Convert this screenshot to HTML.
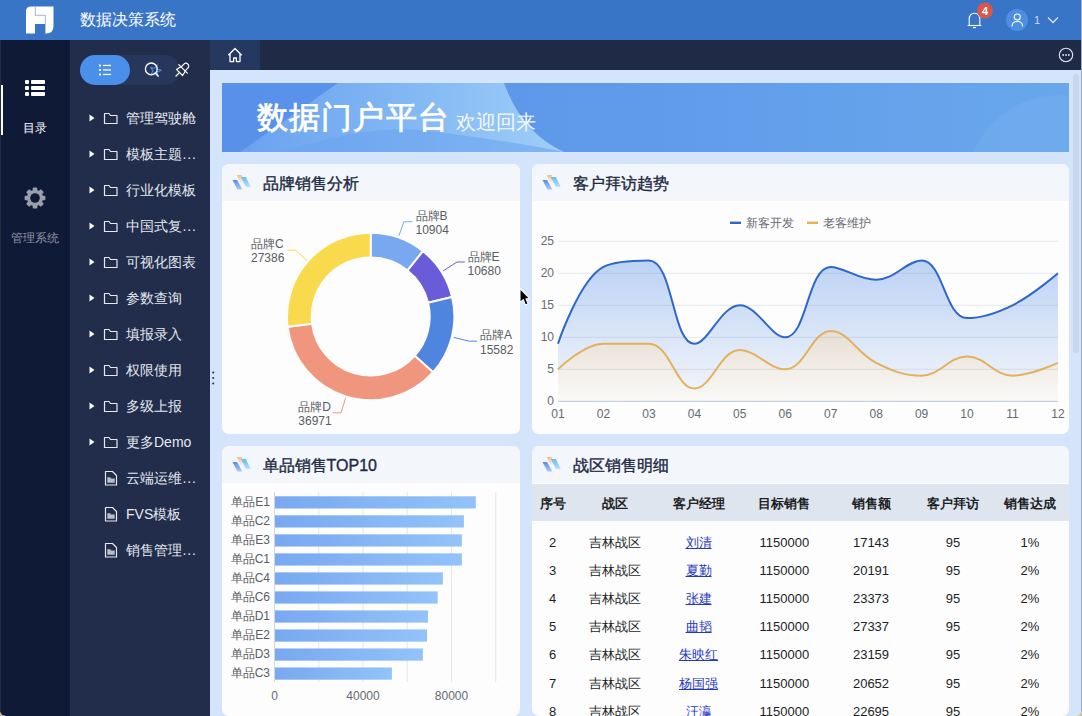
<!DOCTYPE html>
<html><head><meta charset="utf-8">
<style>
*{margin:0;padding:0;box-sizing:border-box}
html,body{width:1082px;height:716px;overflow:hidden;background:#c9b68f;font-family:"Liberation Sans",sans-serif}
.a{position:absolute}
.t{position:absolute;white-space:nowrap;line-height:1}
#win{position:absolute;left:0;top:0;width:1082px;height:716px;overflow:hidden;border-radius:0 0 6px 6px;background:#d4e4fb}
</style></head><body>
<div id="win">
  <!-- header -->
  <div class="a" style="left:0;top:0;width:1082px;height:40px;background:#3975c6"></div>
  <svg class="a" style="left:0;top:0" width="80" height="40">
    <path d="M31,6.5 H53.5 V26 Q53.5,33.5 46,33.5 H45 V24 H35 V33.5 H26 V11.5 Q26,6.5 31,6.5 Z" fill="#fff"/>
    <path d="M35.3,7 V15.3 H45.3 V33" stroke="#5d7fae" stroke-width="0.7" fill="none" opacity="0.8"/>
  </svg>
  <div class="t" style="left:80px;top:12px;font-size:16px;color:#fff">数据决策系统</div>
  <!-- bell -->
  <svg class="a" style="left:960px;top:0" width="110" height="40">
    <path d="M9.2,25.5 V19.5 Q9.2,13.3 14.5,13.3 Q19.8,13.3 19.8,19.5 V25.5" fill="none" stroke="#fff" stroke-width="1.1"/>
    <path d="M7.6,25.5 H21.4" stroke="#fff" stroke-width="1.1"/>
    <path d="M13,27.6 H16" stroke="#fff" stroke-width="1.1"/>
    <circle cx="25" cy="10.5" r="8" fill="#d9564a"/>
    <text x="25" y="14.5" font-size="11" font-weight="bold" fill="#fff" text-anchor="middle" font-family="Liberation Sans">4</text>
    <circle cx="57" cy="20" r="11" fill="#4d8fe3"/>
    <circle cx="57.3" cy="17" r="3" fill="none" stroke="#fff" stroke-width="1.1"/>
    <path d="M52,26.5 Q52,21.5 57.3,21.5 Q62.6,21.5 62.6,26.5" fill="none" stroke="#fff" stroke-width="1.1"/>
    <text x="74" y="23.8" font-size="11" fill="#cfdcef" font-family="Liberation Sans">1</text>
    <path d="M88,17.5 L93,22.5 L98,17.5" fill="none" stroke="#d6e2f5" stroke-width="1.3"/>
  </svg>

  <!-- left nav -->
  <div class="a" style="left:0;top:40px;width:70px;height:676px;background:#0f1a36"></div>
  <div class="a" style="left:0;top:85px;width:3px;height:50px;background:#fff"></div>
  <svg class="a" style="left:0;top:70px" width="70" height="40">
    <rect x="25" y="10" width="4" height="4" rx="1" fill="#fff"/>
    <rect x="31" y="10" width="14" height="4" rx="1" fill="#fff"/>
    <rect x="25" y="16" width="4" height="4" rx="1" fill="#fff"/>
    <rect x="31" y="16" width="14" height="4" rx="1" fill="#fff"/>
    <rect x="25" y="22" width="4" height="4" rx="1" fill="#fff"/>
    <rect x="31" y="22" width="14" height="4" rx="1" fill="#fff"/>
  </svg>
  <div class="t" style="left:23px;top:122px;font-size:12px;color:#fff">目录</div>
  <svg class="a" style="left:24px;top:187px" width="22" height="22">
    <g transform="translate(11,11)" fill="#9aa0ab"><rect x="-2.3" y="-10.4" width="4.6" height="5" rx="1" transform="rotate(0)"/><rect x="-2.3" y="-10.4" width="4.6" height="5" rx="1" transform="rotate(45)"/><rect x="-2.3" y="-10.4" width="4.6" height="5" rx="1" transform="rotate(90)"/><rect x="-2.3" y="-10.4" width="4.6" height="5" rx="1" transform="rotate(135)"/><rect x="-2.3" y="-10.4" width="4.6" height="5" rx="1" transform="rotate(180)"/><rect x="-2.3" y="-10.4" width="4.6" height="5" rx="1" transform="rotate(225)"/><rect x="-2.3" y="-10.4" width="4.6" height="5" rx="1" transform="rotate(270)"/><rect x="-2.3" y="-10.4" width="4.6" height="5" rx="1" transform="rotate(315)"/><circle r="8.1"/></g>
    <circle cx="11" cy="11" r="4.8" fill="#0f1a36"/>
  </svg>
  <div class="t" style="left:11px;top:232px;font-size:12px;color:#8f95a1">管理系统</div>

  <!-- side tree -->
  <div class="a" style="left:70px;top:40px;width:140px;height:676px;background:#212d4b"></div>
  <div class="a" style="left:80px;top:55px;width:100px;height:30px;border-radius:15px;background:#27375b"></div>
  <div class="a" style="left:80px;top:55px;width:50px;height:30px;border-radius:15px;background:#4a8fe9"></div>
  <svg class="a" style="left:80px;top:55px" width="130" height="30">
    <rect x="19" y="9.5" width="2" height="2" fill="#fff"/><rect x="23" y="9.8" width="8" height="1.3" fill="#fff"/>
    <rect x="19" y="14" width="2" height="2" fill="#fff"/><rect x="23" y="14.3" width="8" height="1.3" fill="#fff"/>
    <rect x="19" y="18.5" width="2" height="2" fill="#fff"/><rect x="23" y="18.8" width="8" height="1.3" fill="#fff"/>
    <path d="M75.5,9.5 L76.8,13.6 L81,13.8 L77.7,16.4 L79,20.6 L75.5,18.1 L72,20.6 L73.3,16.4 L70,13.8 L74.2,13.6 Z" fill="#27375b" stroke="#4a8fe9" stroke-width="1.1" stroke-linejoin="round" transform="rotate(15 75.5 15.5)"/>
    <circle cx="71.3" cy="13.9" r="5.9" fill="none" stroke="#fff" stroke-width="1.3"/>
    <path d="M75.6,18.3 L78.4,21.1" stroke="#fff" stroke-width="1.3" stroke-linecap="round"/>
    <g transform="translate(102,15) rotate(45)" fill="none" stroke="#fff" stroke-width="1.2" stroke-linejoin="round" stroke-linecap="round">
      <path d="M-2.8,-1.5 V-5.5 A2.8,2.8 0 0 1 2.8,-5.5 V-1.5"/>
      <path d="M-6,-1.5 H6"/>
      <path d="M-3.2,-1.5 L-4.3,3.5 H4.3 L3.2,-1.5"/>
      <path d="M0,3.5 V8.5"/>
    </g>
  </svg>
  <div id="tree">
  <svg class="a" style="left:86px;top:109px" width="34" height="18"><path d="M3.5,5.5 L8.5,9 L3.5,12.5 Z" fill="#fff"/><path d="M18.5,4.5 H23 L24.5,6.5 H31 V14.5 H18.5 Z" fill="none" stroke="#e6e9ef" stroke-width="1.2" stroke-linejoin="round"/></svg>
  <div class="t" style="left:126px;top:111px;font-size:14px;color:#e4e8ef">管理驾驶舱</div>
  <svg class="a" style="left:86px;top:145px" width="34" height="18"><path d="M3.5,5.5 L8.5,9 L3.5,12.5 Z" fill="#fff"/><path d="M18.5,4.5 H23 L24.5,6.5 H31 V14.5 H18.5 Z" fill="none" stroke="#e6e9ef" stroke-width="1.2" stroke-linejoin="round"/></svg>
  <div class="t" style="left:126px;top:147px;font-size:14px;color:#e4e8ef">模板主题<span style="letter-spacing:0.8px;margin-left:0.5px">...</span></div>
  <svg class="a" style="left:86px;top:181px" width="34" height="18"><path d="M3.5,5.5 L8.5,9 L3.5,12.5 Z" fill="#fff"/><path d="M18.5,4.5 H23 L24.5,6.5 H31 V14.5 H18.5 Z" fill="none" stroke="#e6e9ef" stroke-width="1.2" stroke-linejoin="round"/></svg>
  <div class="t" style="left:126px;top:183px;font-size:14px;color:#e4e8ef">行业化模板</div>
  <svg class="a" style="left:86px;top:217px" width="34" height="18"><path d="M3.5,5.5 L8.5,9 L3.5,12.5 Z" fill="#fff"/><path d="M18.5,4.5 H23 L24.5,6.5 H31 V14.5 H18.5 Z" fill="none" stroke="#e6e9ef" stroke-width="1.2" stroke-linejoin="round"/></svg>
  <div class="t" style="left:126px;top:219px;font-size:14px;color:#e4e8ef">中国式复<span style="letter-spacing:0.8px;margin-left:0.5px">...</span></div>
  <svg class="a" style="left:86px;top:253px" width="34" height="18"><path d="M3.5,5.5 L8.5,9 L3.5,12.5 Z" fill="#fff"/><path d="M18.5,4.5 H23 L24.5,6.5 H31 V14.5 H18.5 Z" fill="none" stroke="#e6e9ef" stroke-width="1.2" stroke-linejoin="round"/></svg>
  <div class="t" style="left:126px;top:255px;font-size:14px;color:#e4e8ef">可视化图表</div>
  <svg class="a" style="left:86px;top:289px" width="34" height="18"><path d="M3.5,5.5 L8.5,9 L3.5,12.5 Z" fill="#fff"/><path d="M18.5,4.5 H23 L24.5,6.5 H31 V14.5 H18.5 Z" fill="none" stroke="#e6e9ef" stroke-width="1.2" stroke-linejoin="round"/></svg>
  <div class="t" style="left:126px;top:291px;font-size:14px;color:#e4e8ef">参数查询</div>
  <svg class="a" style="left:86px;top:325px" width="34" height="18"><path d="M3.5,5.5 L8.5,9 L3.5,12.5 Z" fill="#fff"/><path d="M18.5,4.5 H23 L24.5,6.5 H31 V14.5 H18.5 Z" fill="none" stroke="#e6e9ef" stroke-width="1.2" stroke-linejoin="round"/></svg>
  <div class="t" style="left:126px;top:327px;font-size:14px;color:#e4e8ef">填报录入</div>
  <svg class="a" style="left:86px;top:361px" width="34" height="18"><path d="M3.5,5.5 L8.5,9 L3.5,12.5 Z" fill="#fff"/><path d="M18.5,4.5 H23 L24.5,6.5 H31 V14.5 H18.5 Z" fill="none" stroke="#e6e9ef" stroke-width="1.2" stroke-linejoin="round"/></svg>
  <div class="t" style="left:126px;top:363px;font-size:14px;color:#e4e8ef">权限使用</div>
  <svg class="a" style="left:86px;top:397px" width="34" height="18"><path d="M3.5,5.5 L8.5,9 L3.5,12.5 Z" fill="#fff"/><path d="M18.5,4.5 H23 L24.5,6.5 H31 V14.5 H18.5 Z" fill="none" stroke="#e6e9ef" stroke-width="1.2" stroke-linejoin="round"/></svg>
  <div class="t" style="left:126px;top:399px;font-size:14px;color:#e4e8ef">多级上报</div>
  <svg class="a" style="left:86px;top:433px" width="34" height="18"><path d="M3.5,5.5 L8.5,9 L3.5,12.5 Z" fill="#fff"/><path d="M18.5,4.5 H23 L24.5,6.5 H31 V14.5 H18.5 Z" fill="none" stroke="#e6e9ef" stroke-width="1.2" stroke-linejoin="round"/></svg>
  <div class="t" style="left:126px;top:435px;font-size:14px;color:#e4e8ef">更多Demo</div>
  <svg class="a" style="left:100px;top:469px" width="20" height="18"><path d="M5.5,2.5 H12.5 L16.5,6.5 V16 H5.5 Z" fill="none" stroke="#e6e9ef" stroke-width="1.2" stroke-linejoin="round"/><path d="M7.3,8.2 H10.6 V9.4 H14.7 V13.8 H7.3 Z" fill="#b9bfca"/></svg>
  <div class="t" style="left:126px;top:471px;font-size:14px;color:#e4e8ef">云端运维<span style="letter-spacing:0.8px;margin-left:0.5px">...</span></div>
  <svg class="a" style="left:100px;top:505px" width="20" height="18"><path d="M5.5,2.5 H12.5 L16.5,6.5 V16 H5.5 Z" fill="none" stroke="#e6e9ef" stroke-width="1.2" stroke-linejoin="round"/><path d="M7.3,8.2 H10.6 V9.4 H14.7 V13.8 H7.3 Z" fill="#b9bfca"/></svg>
  <div class="t" style="left:126px;top:507px;font-size:14px;color:#e4e8ef">FVS模板</div>
  <svg class="a" style="left:100px;top:541px" width="20" height="18"><path d="M5.5,2.5 H12.5 L16.5,6.5 V16 H5.5 Z" fill="none" stroke="#e6e9ef" stroke-width="1.2" stroke-linejoin="round"/><path d="M7.3,8.2 H10.6 V9.4 H14.7 V13.8 H7.3 Z" fill="#b9bfca"/></svg>
  <div class="t" style="left:126px;top:543px;font-size:14px;color:#e4e8ef">销售管理<span style="letter-spacing:0.8px;margin-left:0.5px">...</span></div>
  </div><!--/tree-->

  <!-- tab bar -->
  <div class="a" style="left:210px;top:40px;width:872px;height:30px;background:#1f2a47"></div>
  <div class="a" style="left:210px;top:40px;width:50px;height:30px;background:#253860"></div>
  <svg class="a" style="left:226px;top:46px" width="18" height="18">
    <path d="M2.3,9.2 L9,2.5 L15.7,9.2 M4,7.5 V15.6 H7.6 V12 H10.4 V15.6 H14 V7.5" fill="none" stroke="#fff" stroke-width="1.3" stroke-linejoin="round"/>
  </svg>
  <svg class="a" style="left:1058px;top:47px" width="16" height="16">
    <circle cx="8" cy="8" r="6.7" fill="none" stroke="#dfe5ee" stroke-width="1.1"/>
    <circle cx="5.2" cy="8" r="0.9" fill="#dfe5ee"/><circle cx="8" cy="8" r="0.9" fill="#dfe5ee"/><circle cx="10.8" cy="8" r="0.9" fill="#dfe5ee"/>
  </svg>
  <svg class="a" style="left:208px;top:368px" width="10" height="20">
    <circle cx="5.2" cy="4.5" r="1" fill="#1e2a48"/><circle cx="5.2" cy="10" r="1" fill="#2a3550"/><circle cx="5.2" cy="15.5" r="1" fill="#1e2a48"/>
  </svg>

  <!-- scrollbar -->
    <div class="a" style="left:1072.5px;top:73.5px;width:6px;height:279px;border-radius:3px;background:#c8d7ee"></div>
  <div class="a" style="left:1080.5px;top:0;width:1.5px;height:716px;background:#a3abb8"></div>
  <div class="a" style="left:0;top:40px;width:1px;height:676px;background:#222c42"></div>

  <!-- banner -->
  <svg class="a" style="left:222px;top:83px" width="847" height="69">
    <defs>
      <linearGradient id="bg1" x1="0" y1="0" x2="1" y2="0">
        <stop offset="0" stop-color="#5890ea"/><stop offset="0.4" stop-color="#5e99ea"/><stop offset="1" stop-color="#69a7ec"/>
      </linearGradient>
      <linearGradient id="bg2" x1="0" y1="0" x2="1" y2="0">
        <stop offset="0" stop-color="#6aa2ef"/><stop offset="0.6" stop-color="#86bbf4"/><stop offset="1" stop-color="#a0cef8"/>
      </linearGradient>
    </defs>
    <rect width="847" height="69" fill="url(#bg1)"/>
    <path d="M18,69 L116,0 H282 Q300,50 342,69 Z" fill="url(#bg2)"/>
    <path d="M60,69 Q150,40 208,48 Q300,60 342,69 Z" fill="#6aa2ee" opacity="0.55"/>
    <circle cx="838" cy="107" r="95" fill="#7fb9f1" opacity="0.25"/>
  </svg>
  <div class="t" style="left:256.5px;top:101.5px;font-size:30.5px;letter-spacing:1.3px;color:#fff;-webkit-text-stroke:0.8px #fff">数据门户平台</div>
  <div class="t" style="left:456px;top:112px;font-size:20px;color:#f4f8ff">欢迎回来</div>

  <div id="cards">
  <svg width="0" height="0" style="position:absolute"><defs>
<linearGradient id="ic1" x1="0" y1="0" x2="0" y2="1"><stop offset="0" stop-color="#5b8de8"/><stop offset="1" stop-color="#adc9f1"/></linearGradient>
<linearGradient id="ic2" x1="0" y1="0" x2="0" y2="1"><stop offset="0" stop-color="#f3bd86"/><stop offset="1" stop-color="#f3bd86" stop-opacity="0"/></linearGradient>
<linearGradient id="ic3" x1="0" y1="0" x2="0" y2="1"><stop offset="0" stop-color="#5fbff0"/><stop offset="1" stop-color="#bcdcf8"/></linearGradient>
</defs></svg>
  <div class="a" style="left:222px;top:164px;width:298px;height:270px;border-radius:7px;background:#fdfdfd;overflow:hidden"><div class="a" style="left:0;top:0;width:298px;height:37px;background:#f3f6fa"></div></div><svg class="a" style="left:222px;top:164px" width="32" height="30"><path d="M10.5,16.1 H15.1 L20.3,25.6 H15.4 Z" fill="url(#ic1)"/><path d="M14.7,10.9 H19.6 L23.5,19.5 H18.6 Z" fill="url(#ic2)"/><path d="M18.9,13 H23.8 L28.7,22.8 H23.8 Z" fill="url(#ic3)"/></svg><div class="t" style="left:262.6px;top:175.8px;font-size:16px;color:#1e2b45;-webkit-text-stroke:0.38px #1e2b45">品牌销售分析</div>
  <div class="a" style="left:532px;top:164px;width:537px;height:270px;border-radius:7px;background:#fdfdfd;overflow:hidden"><div class="a" style="left:0;top:0;width:537px;height:37px;background:#f3f6fa"></div></div><svg class="a" style="left:532px;top:164px" width="32" height="30"><path d="M10.5,16.1 H15.1 L20.3,25.6 H15.4 Z" fill="url(#ic1)"/><path d="M14.7,10.9 H19.6 L23.5,19.5 H18.6 Z" fill="url(#ic2)"/><path d="M18.9,13 H23.8 L28.7,22.8 H23.8 Z" fill="url(#ic3)"/></svg><div class="t" style="left:572.6px;top:175.8px;font-size:16px;color:#1e2b45;-webkit-text-stroke:0.38px #1e2b45">客户拜访趋势</div>
  <div class="a" style="left:222px;top:446px;width:298px;height:270px;border-radius:7px;background:#fdfdfd;overflow:hidden"><div class="a" style="left:0;top:0;width:298px;height:37px;background:#f3f6fa"></div></div><svg class="a" style="left:222px;top:446px" width="32" height="30"><path d="M10.5,16.1 H15.1 L20.3,25.6 H15.4 Z" fill="url(#ic1)"/><path d="M14.7,10.9 H19.6 L23.5,19.5 H18.6 Z" fill="url(#ic2)"/><path d="M18.9,13 H23.8 L28.7,22.8 H23.8 Z" fill="url(#ic3)"/></svg><div class="t" style="left:262.6px;top:457.8px;font-size:16px;color:#1e2b45;-webkit-text-stroke:0.38px #1e2b45">单品销售TOP10</div>
  <div class="a" style="left:532px;top:446px;width:537px;height:270px;border-radius:7px;background:#fdfdfd;overflow:hidden"><div class="a" style="left:0;top:0;width:537px;height:37px;background:#f3f6fa"></div></div><svg class="a" style="left:532px;top:446px" width="32" height="30"><path d="M10.5,16.1 H15.1 L20.3,25.6 H15.4 Z" fill="url(#ic1)"/><path d="M14.7,10.9 H19.6 L23.5,19.5 H18.6 Z" fill="url(#ic2)"/><path d="M18.9,13 H23.8 L28.7,22.8 H23.8 Z" fill="url(#ic3)"/></svg><div class="t" style="left:572.6px;top:457.8px;font-size:16px;color:#1e2b45;-webkit-text-stroke:0.38px #1e2b45">战区销售明细</div>
  <svg class="a" style="left:0;top:0" width="1082" height="716">
<path d="M370.70,232.80 A83.7,83.7 0 0 1 422.99,251.15 L407.56,270.43 A59,59 0 0 0 370.70,257.50 Z" fill="#78a9f0" stroke="#fdfdfd" stroke-width="2" stroke-linejoin="round"/>
<path d="M422.99,251.15 A83.7,83.7 0 0 1 452.10,297.01 L428.08,302.76 A59,59 0 0 0 407.56,270.43 Z" fill="#6a5bd8" stroke="#fdfdfd" stroke-width="2" stroke-linejoin="round"/>
<path d="M452.10,297.01 A83.7,83.7 0 0 1 433.11,372.28 L414.69,355.82 A59,59 0 0 0 428.08,302.76 Z" fill="#4f84df" stroke="#fdfdfd" stroke-width="2" stroke-linejoin="round"/>
<path d="M433.11,372.28 A83.7,83.7 0 0 1 287.64,326.86 L312.15,323.80 A59,59 0 0 0 414.69,355.82 Z" fill="#f0967f" stroke="#fdfdfd" stroke-width="2" stroke-linejoin="round"/>
<path d="M287.64,326.86 A83.7,83.7 0 0 1 370.70,232.80 L370.70,257.50 A59,59 0 0 0 312.15,323.80 Z" fill="#f9da4d" stroke="#fdfdfd" stroke-width="2" stroke-linejoin="round"/>
<polyline points="399,235.7 403.8,221.7 412.3,221.7" fill="none" stroke="#78a9f0" stroke-width="1"/>
<polyline points="443,271 457,262 464.8,262" fill="none" stroke="#6a5bd8" stroke-width="1"/>
<polyline points="453.7,337.4 469.3,341.2 477.1,341.2" fill="none" stroke="#4f84df" stroke-width="1"/>
<polyline points="345.6,398 341,412.8 332.7,412.8" fill="none" stroke="#f0967f" stroke-width="1"/>
<polyline points="307.4,260.9 295.5,250.2 287.4,250.2" fill="none" stroke="#f9da4d" stroke-width="1"/>
</svg>
<div class="t" style="left:415.5px;top:208.5px;font-size:12px;color:#595c63;line-height:14.5px">品牌B<br>10904</div>
<div class="t" style="left:467.5px;top:249.5px;font-size:12px;color:#595c63;line-height:14.5px">品牌E<br>10680</div>
<div class="t" style="left:480px;top:328.0px;font-size:12px;color:#595c63;line-height:14.5px">品牌A<br>15582</div>
<div class="t" style="left:298.3px;top:399.8px;font-size:12px;color:#595c63;line-height:14.5px">品牌D<br>36971</div>
<div class="t" style="left:251px;top:236.8px;font-size:12px;color:#595c63;line-height:14.5px">品牌C<br>27386</div>
  <svg class="a" style="left:0;top:0" width="1082" height="716">
<defs><linearGradient id="fa" x1="0" y1="260" x2="0" y2="401" gradientUnits="userSpaceOnUse"><stop offset="0" stop-color="#bcd2f4"/><stop offset="1" stop-color="#f3f6fb"/></linearGradient>
<linearGradient id="fb" x1="0" y1="331" x2="0" y2="401" gradientUnits="userSpaceOnUse"><stop offset="0" stop-color="#e6ded3"/><stop offset="1" stop-color="#fbfaf8"/></linearGradient></defs>
<path d="M558.00,343.70 C558.00,343.70 579.44,279.34 603.45,266.90 C615.80,260.50 637.04,260.50 648.90,260.50 C673.40,260.50 672.01,343.70 694.35,343.70 C708.37,343.70 721.00,305.30 739.80,305.30 C757.36,305.30 770.75,337.30 785.25,337.30 C807.11,337.30 807.44,266.90 830.70,266.90 C843.80,266.90 858.37,279.70 876.15,279.70 C894.73,279.70 906.98,260.50 921.60,260.50 C943.34,260.50 944.93,318.10 967.05,318.10 C981.29,318.10 995.80,313.53 1012.50,305.30 C1032.16,295.61 1057.95,273.30 1057.95,273.30 L1057.95,401.3 L558,401.3 Z" fill="url(#fa)"/>
<path d="M558.00,369.30 C558.00,369.30 584.02,343.70 603.45,343.70 C620.38,343.70 633.78,343.70 648.90,343.70 C670.14,343.70 675.53,388.50 694.35,388.50 C711.89,388.50 719.92,350.10 739.80,350.10 C756.28,350.10 768.77,369.30 785.25,369.30 C805.13,369.30 811.90,330.90 830.70,330.90 C848.26,330.90 856.49,353.21 876.15,362.90 C892.85,371.13 903.82,375.70 921.60,375.70 C940.18,375.70 948.87,356.50 967.05,356.50 C985.23,356.50 993.92,375.70 1012.50,375.70 C1030.28,375.70 1057.95,362.90 1057.95,362.90 L1057.95,401.3 L558,401.3 Z" fill="url(#fb)"/>
<line x1="558" y1="369.3" x2="1058" y2="369.3" stroke="#6a7a9a" stroke-opacity="0.17" stroke-width="1"/>
<line x1="558" y1="337.3" x2="1058" y2="337.3" stroke="#6a7a9a" stroke-opacity="0.17" stroke-width="1"/>
<line x1="558" y1="305.3" x2="1058" y2="305.3" stroke="#6a7a9a" stroke-opacity="0.17" stroke-width="1"/>
<line x1="558" y1="273.3" x2="1058" y2="273.3" stroke="#6a7a9a" stroke-opacity="0.17" stroke-width="1"/>
<line x1="558" y1="241.3" x2="1058" y2="241.3" stroke="#6a7a9a" stroke-opacity="0.17" stroke-width="1"/>
<line x1="558" y1="401.3" x2="1058" y2="401.3" stroke="#b9c7da" stroke-width="1"/>
<path d="M558.00,343.70 C558.00,343.70 579.44,279.34 603.45,266.90 C615.80,260.50 637.04,260.50 648.90,260.50 C673.40,260.50 672.01,343.70 694.35,343.70 C708.37,343.70 721.00,305.30 739.80,305.30 C757.36,305.30 770.75,337.30 785.25,337.30 C807.11,337.30 807.44,266.90 830.70,266.90 C843.80,266.90 858.37,279.70 876.15,279.70 C894.73,279.70 906.98,260.50 921.60,260.50 C943.34,260.50 944.93,318.10 967.05,318.10 C981.29,318.10 995.80,313.53 1012.50,305.30 C1032.16,295.61 1057.95,273.30 1057.95,273.30" fill="none" stroke="#2f67c8" stroke-width="2"/>
<path d="M558.00,369.30 C558.00,369.30 584.02,343.70 603.45,343.70 C620.38,343.70 633.78,343.70 648.90,343.70 C670.14,343.70 675.53,388.50 694.35,388.50 C711.89,388.50 719.92,350.10 739.80,350.10 C756.28,350.10 768.77,369.30 785.25,369.30 C805.13,369.30 811.90,330.90 830.70,330.90 C848.26,330.90 856.49,353.21 876.15,362.90 C892.85,371.13 903.82,375.70 921.60,375.70 C940.18,375.70 948.87,356.50 967.05,356.50 C985.23,356.50 993.92,375.70 1012.50,375.70 C1030.28,375.70 1057.95,362.90 1057.95,362.90" fill="none" stroke="#e2b15e" stroke-width="2"/>
<line x1="730" y1="222.8" x2="741" y2="222.8" stroke="#2f67c8" stroke-width="2.4"/>
<line x1="807" y1="222.8" x2="818" y2="222.8" stroke="#e2b15e" stroke-width="2.4"/>
</svg>
<div class="t" style="left:520px;width:34px;text-align:right;top:394.8px;font-size:12px;color:#666a72">0</div>
<div class="t" style="left:520px;width:34px;text-align:right;top:362.8px;font-size:12px;color:#666a72">5</div>
<div class="t" style="left:520px;width:34px;text-align:right;top:330.8px;font-size:12px;color:#666a72">10</div>
<div class="t" style="left:520px;width:34px;text-align:right;top:298.8px;font-size:12px;color:#666a72">15</div>
<div class="t" style="left:520px;width:34px;text-align:right;top:266.8px;font-size:12px;color:#666a72">20</div>
<div class="t" style="left:520px;width:34px;text-align:right;top:234.8px;font-size:12px;color:#666a72">25</div>
<div class="t" style="left:538.0px;width:40px;text-align:center;top:407.5px;font-size:12px;color:#666a72">01</div>
<div class="t" style="left:583.5px;width:40px;text-align:center;top:407.5px;font-size:12px;color:#666a72">02</div>
<div class="t" style="left:628.9px;width:40px;text-align:center;top:407.5px;font-size:12px;color:#666a72">03</div>
<div class="t" style="left:674.4px;width:40px;text-align:center;top:407.5px;font-size:12px;color:#666a72">04</div>
<div class="t" style="left:719.8px;width:40px;text-align:center;top:407.5px;font-size:12px;color:#666a72">05</div>
<div class="t" style="left:765.2px;width:40px;text-align:center;top:407.5px;font-size:12px;color:#666a72">06</div>
<div class="t" style="left:810.7px;width:40px;text-align:center;top:407.5px;font-size:12px;color:#666a72">07</div>
<div class="t" style="left:856.2px;width:40px;text-align:center;top:407.5px;font-size:12px;color:#666a72">08</div>
<div class="t" style="left:901.6px;width:40px;text-align:center;top:407.5px;font-size:12px;color:#666a72">09</div>
<div class="t" style="left:947.0px;width:40px;text-align:center;top:407.5px;font-size:12px;color:#666a72">10</div>
<div class="t" style="left:992.5px;width:40px;text-align:center;top:407.5px;font-size:12px;color:#666a72">11</div>
<div class="t" style="left:1038.0px;width:40px;text-align:center;top:407.5px;font-size:12px;color:#666a72">12</div>
<div class="t" style="left:746px;top:216.5px;font-size:12px;color:#666a72">新客开发</div>
<div class="t" style="left:823px;top:216.5px;font-size:12px;color:#666a72">老客维护</div>
  <svg class="a" style="left:0;top:0" width="1082" height="716">
<defs><linearGradient id="bar" x1="0" y1="0" x2="1" y2="0"><stop offset="0" stop-color="#78a8f0"/><stop offset="1" stop-color="#93c3f9"/></linearGradient></defs>
<line x1="318.75" y1="492" x2="318.75" y2="682" stroke="#e3e6ee" stroke-width="1"/>
<line x1="363.00" y1="492" x2="363.00" y2="682" stroke="#e3e6ee" stroke-width="1"/>
<line x1="407.25" y1="492" x2="407.25" y2="682" stroke="#e3e6ee" stroke-width="1"/>
<line x1="451.50" y1="492" x2="451.50" y2="682" stroke="#e3e6ee" stroke-width="1"/>
<line x1="495.75" y1="492" x2="495.75" y2="682" stroke="#e3e6ee" stroke-width="1"/>
<line x1="274.5" y1="492" x2="274.5" y2="682" stroke="#d0d5de" stroke-width="1"/>
<rect x="275" y="496.30" width="200.80" height="12.2" fill="url(#bar)"/>
<rect x="275" y="515.32" width="188.90" height="12.2" fill="url(#bar)"/>
<rect x="275" y="534.34" width="186.90" height="12.2" fill="url(#bar)"/>
<rect x="275" y="553.36" width="186.90" height="12.2" fill="url(#bar)"/>
<rect x="275" y="572.38" width="167.90" height="12.2" fill="url(#bar)"/>
<rect x="275" y="591.40" width="162.70" height="12.2" fill="url(#bar)"/>
<rect x="275" y="610.42" width="153.00" height="12.2" fill="url(#bar)"/>
<rect x="275" y="629.44" width="152.00" height="12.2" fill="url(#bar)"/>
<rect x="275" y="648.46" width="147.90" height="12.2" fill="url(#bar)"/>
<rect x="275" y="667.48" width="116.90" height="12.2" fill="url(#bar)"/>
</svg>
<div class="t" style="left:200px;width:70px;text-align:right;top:495.9px;font-size:12px;color:#595c63">单品E1</div>
<div class="t" style="left:200px;width:70px;text-align:right;top:514.9px;font-size:12px;color:#595c63">单品C2</div>
<div class="t" style="left:200px;width:70px;text-align:right;top:533.9px;font-size:12px;color:#595c63">单品E3</div>
<div class="t" style="left:200px;width:70px;text-align:right;top:553.0px;font-size:12px;color:#595c63">单品C1</div>
<div class="t" style="left:200px;width:70px;text-align:right;top:572.0px;font-size:12px;color:#595c63">单品C4</div>
<div class="t" style="left:200px;width:70px;text-align:right;top:591.0px;font-size:12px;color:#595c63">单品C6</div>
<div class="t" style="left:200px;width:70px;text-align:right;top:610.0px;font-size:12px;color:#595c63">单品D1</div>
<div class="t" style="left:200px;width:70px;text-align:right;top:629.0px;font-size:12px;color:#595c63">单品E2</div>
<div class="t" style="left:200px;width:70px;text-align:right;top:648.1px;font-size:12px;color:#595c63">单品D3</div>
<div class="t" style="left:200px;width:70px;text-align:right;top:667.1px;font-size:12px;color:#595c63">单品C3</div>
<div class="t" style="left:244.5px;width:60px;text-align:center;top:690px;font-size:12px;color:#666a72">0</div>
<div class="t" style="left:333.0px;width:60px;text-align:center;top:690px;font-size:12px;color:#666a72">40000</div>
<div class="t" style="left:421.5px;width:60px;text-align:center;top:690px;font-size:12px;color:#666a72">80000</div>
  <div class="a" style="left:532px;top:484px;width:537px;height:37px;background:#dfe5ee"></div>
<div class="t" style="left:512.5px;width:80px;text-align:center;top:497px;font-size:13px;font-weight:bold;color:#1c1f26">序号</div>
<div class="t" style="left:574.5px;width:80px;text-align:center;top:497px;font-size:13px;font-weight:bold;color:#1c1f26">战区</div>
<div class="t" style="left:658.5px;width:80px;text-align:center;top:497px;font-size:13px;font-weight:bold;color:#1c1f26">客户经理</div>
<div class="t" style="left:744.4px;width:80px;text-align:center;top:497px;font-size:13px;font-weight:bold;color:#1c1f26">目标销售</div>
<div class="t" style="left:831px;width:80px;text-align:center;top:497px;font-size:13px;font-weight:bold;color:#1c1f26">销售额</div>
<div class="t" style="left:913px;width:80px;text-align:center;top:497px;font-size:13px;font-weight:bold;color:#1c1f26">客户拜访</div>
<div class="t" style="left:990px;width:80px;text-align:center;top:497px;font-size:13px;font-weight:bold;color:#1c1f26">销售达成</div>
<div class="t" style="left:512.5px;width:80px;text-align:center;top:535.5px;font-size:13px;color:#1c1f26">2</div>
<div class="t" style="left:574.5px;width:80px;text-align:center;top:535.5px;font-size:13px;color:#1c1f26">吉林战区</div>
<div class="t" style="left:658.5px;width:80px;text-align:center;top:535.5px;font-size:13px;color:#2638c0;text-decoration:underline">刘清</div>
<div class="t" style="left:744.4px;width:80px;text-align:center;top:535.5px;font-size:13px;color:#1c1f26">1150000</div>
<div class="t" style="left:831px;width:80px;text-align:center;top:535.5px;font-size:13px;color:#1c1f26">17143</div>
<div class="t" style="left:913px;width:80px;text-align:center;top:535.5px;font-size:13px;color:#1c1f26">95</div>
<div class="t" style="left:990px;width:80px;text-align:center;top:535.5px;font-size:13px;color:#1c1f26">1%</div>
<div class="t" style="left:512.5px;width:80px;text-align:center;top:563.7px;font-size:13px;color:#1c1f26">3</div>
<div class="t" style="left:574.5px;width:80px;text-align:center;top:563.7px;font-size:13px;color:#1c1f26">吉林战区</div>
<div class="t" style="left:658.5px;width:80px;text-align:center;top:563.7px;font-size:13px;color:#2638c0;text-decoration:underline">夏勤</div>
<div class="t" style="left:744.4px;width:80px;text-align:center;top:563.7px;font-size:13px;color:#1c1f26">1150000</div>
<div class="t" style="left:831px;width:80px;text-align:center;top:563.7px;font-size:13px;color:#1c1f26">20191</div>
<div class="t" style="left:913px;width:80px;text-align:center;top:563.7px;font-size:13px;color:#1c1f26">95</div>
<div class="t" style="left:990px;width:80px;text-align:center;top:563.7px;font-size:13px;color:#1c1f26">2%</div>
<div class="t" style="left:512.5px;width:80px;text-align:center;top:591.9px;font-size:13px;color:#1c1f26">4</div>
<div class="t" style="left:574.5px;width:80px;text-align:center;top:591.9px;font-size:13px;color:#1c1f26">吉林战区</div>
<div class="t" style="left:658.5px;width:80px;text-align:center;top:591.9px;font-size:13px;color:#2638c0;text-decoration:underline">张建</div>
<div class="t" style="left:744.4px;width:80px;text-align:center;top:591.9px;font-size:13px;color:#1c1f26">1150000</div>
<div class="t" style="left:831px;width:80px;text-align:center;top:591.9px;font-size:13px;color:#1c1f26">23373</div>
<div class="t" style="left:913px;width:80px;text-align:center;top:591.9px;font-size:13px;color:#1c1f26">95</div>
<div class="t" style="left:990px;width:80px;text-align:center;top:591.9px;font-size:13px;color:#1c1f26">2%</div>
<div class="t" style="left:512.5px;width:80px;text-align:center;top:620.1px;font-size:13px;color:#1c1f26">5</div>
<div class="t" style="left:574.5px;width:80px;text-align:center;top:620.1px;font-size:13px;color:#1c1f26">吉林战区</div>
<div class="t" style="left:658.5px;width:80px;text-align:center;top:620.1px;font-size:13px;color:#2638c0;text-decoration:underline">曲韬</div>
<div class="t" style="left:744.4px;width:80px;text-align:center;top:620.1px;font-size:13px;color:#1c1f26">1150000</div>
<div class="t" style="left:831px;width:80px;text-align:center;top:620.1px;font-size:13px;color:#1c1f26">27337</div>
<div class="t" style="left:913px;width:80px;text-align:center;top:620.1px;font-size:13px;color:#1c1f26">95</div>
<div class="t" style="left:990px;width:80px;text-align:center;top:620.1px;font-size:13px;color:#1c1f26">2%</div>
<div class="t" style="left:512.5px;width:80px;text-align:center;top:648.3px;font-size:13px;color:#1c1f26">6</div>
<div class="t" style="left:574.5px;width:80px;text-align:center;top:648.3px;font-size:13px;color:#1c1f26">吉林战区</div>
<div class="t" style="left:658.5px;width:80px;text-align:center;top:648.3px;font-size:13px;color:#2638c0;text-decoration:underline">朱映红</div>
<div class="t" style="left:744.4px;width:80px;text-align:center;top:648.3px;font-size:13px;color:#1c1f26">1150000</div>
<div class="t" style="left:831px;width:80px;text-align:center;top:648.3px;font-size:13px;color:#1c1f26">23159</div>
<div class="t" style="left:913px;width:80px;text-align:center;top:648.3px;font-size:13px;color:#1c1f26">95</div>
<div class="t" style="left:990px;width:80px;text-align:center;top:648.3px;font-size:13px;color:#1c1f26">2%</div>
<div class="t" style="left:512.5px;width:80px;text-align:center;top:676.5px;font-size:13px;color:#1c1f26">7</div>
<div class="t" style="left:574.5px;width:80px;text-align:center;top:676.5px;font-size:13px;color:#1c1f26">吉林战区</div>
<div class="t" style="left:658.5px;width:80px;text-align:center;top:676.5px;font-size:13px;color:#2638c0;text-decoration:underline">杨国强</div>
<div class="t" style="left:744.4px;width:80px;text-align:center;top:676.5px;font-size:13px;color:#1c1f26">1150000</div>
<div class="t" style="left:831px;width:80px;text-align:center;top:676.5px;font-size:13px;color:#1c1f26">20652</div>
<div class="t" style="left:913px;width:80px;text-align:center;top:676.5px;font-size:13px;color:#1c1f26">95</div>
<div class="t" style="left:990px;width:80px;text-align:center;top:676.5px;font-size:13px;color:#1c1f26">2%</div>
<div class="t" style="left:512.5px;width:80px;text-align:center;top:704.7px;font-size:13px;color:#1c1f26">8</div>
<div class="t" style="left:574.5px;width:80px;text-align:center;top:704.7px;font-size:13px;color:#1c1f26">吉林战区</div>
<div class="t" style="left:658.5px;width:80px;text-align:center;top:704.7px;font-size:13px;color:#2638c0;text-decoration:underline">汪瀛</div>
<div class="t" style="left:744.4px;width:80px;text-align:center;top:704.7px;font-size:13px;color:#1c1f26">1150000</div>
<div class="t" style="left:831px;width:80px;text-align:center;top:704.7px;font-size:13px;color:#1c1f26">22695</div>
<div class="t" style="left:913px;width:80px;text-align:center;top:704.7px;font-size:13px;color:#1c1f26">95</div>
<div class="t" style="left:990px;width:80px;text-align:center;top:704.7px;font-size:13px;color:#1c1f26">2%</div>
  </div><!--/cards-->
  <svg class="a" style="left:515px;top:285px" width="20" height="24">
    <path d="M5,3.5 L5,17.5 L8.3,14.6 L10.4,19.9 L13.1,18.8 L11,13.8 L14.8,13.6 Z" fill="#000" stroke="#fff" stroke-width="1.1" stroke-linejoin="round"/>
  </svg>
</div>
</body></html>
